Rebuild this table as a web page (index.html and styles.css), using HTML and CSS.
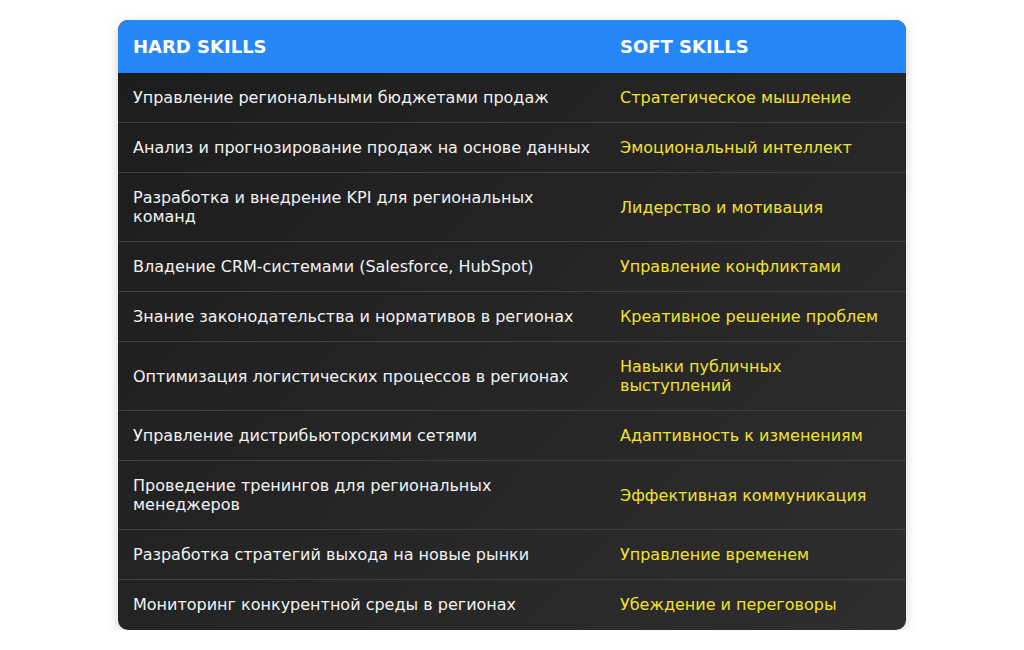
FILE: index.html
```html
<!DOCTYPE html>
<html lang="ru">
<head>
<meta charset="utf-8">
<link rel="stylesheet" href="styles.css">
</head>
<body>
<div class="wrap">
<table class="skills">
<thead>
<tr><th class="c1">HARD SKILLS</th><th class="c2">SOFT SKILLS</th></tr>
</thead>
<tbody>
<tr><td>Управление региональными бюджетами продаж</td><td class="soft">Стратегическое мышление</td></tr>
<tr><td>Анализ и прогнозирование продаж на основе данных</td><td class="soft">Эмоциональный интеллект</td></tr>
<tr><td>Разработка и внедрение KPI для региональных команд</td><td class="soft">Лидерство и мотивация</td></tr>
<tr><td>Владение CRM-системами (Salesforce, HubSpot)</td><td class="soft">Управление конфликтами</td></tr>
<tr><td>Знание законодательства и нормативов в регионах</td><td class="soft">Креативное решение проблем</td></tr>
<tr><td>Оптимизация логистических процессов в регионах</td><td class="soft">Навыки публичных выступлений</td></tr>
<tr><td>Управление дистрибьюторскими сетями</td><td class="soft">Адаптивность к изменениям</td></tr>
<tr><td>Проведение тренингов для региональных менеджеров</td><td class="soft">Эффективная коммуникация</td></tr>
<tr><td>Разработка стратегий выхода на новые рынки</td><td class="soft">Управление временем</td></tr>
<tr><td>Мониторинг конкурентной среды в регионах</td><td class="soft">Убеждение и переговоры</td></tr>
</tbody>
</table>
</div>
</body>
</html>
```

FILE: styles.css
```css
* { box-sizing: border-box; }
html, body { margin: 0; padding: 0; background: #ffffff; }
body { font-family: "DejaVu Sans", sans-serif; }
.wrap { padding: 20px 0 0 118px; }
.skills {
  width: 788px;
  border-collapse: separate;
  border-spacing: 0;
  border-radius: 10px;
  overflow: hidden;
  background: linear-gradient(135deg, #1c1c1c 0%, #2e2e2e 100%);
  box-shadow: 0 4px 12px rgba(0,0,0,0.18);
  table-layout: fixed;
}
.c1 { width: 487px; }
.skills th {
  background: #2688f8;
  color: #ffffff;
  text-align: left;
  font-weight: bold;
  font-size: 18px;
  padding: 0 15px 1px;
  height: 53px;
}
.skills td {
  color: #f2f2f2;
  font-size: 16px;
  line-height: 19px;
  padding: 15px 15px;
  border-bottom: 1px solid #404040;
  vertical-align: middle;
}
.skills td:first-child { padding-right: 6px; }
.skills tbody tr:last-child td { border-bottom: none; padding-bottom: 16px; }
.skills td.soft { color: #f3e22a; }
```
